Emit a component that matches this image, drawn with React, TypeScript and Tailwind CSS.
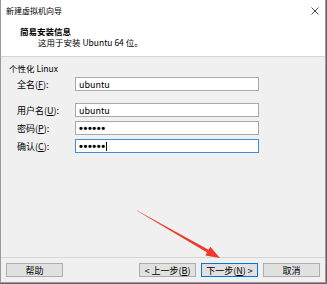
import React from "react";

const font = { fontFamily: '"Noto Sans CJK SC", "Noto Sans", sans-serif' };

const fields = [
  { label: "全名", key: "F", value: "ubuntu", gap: "mt-[3px]" },
  { label: "用户名", key: "U", value: "ubuntu", gap: "mt-[12px]" },
  { label: "密码", key: "P", value: "", gap: "mt-[4px]" },
  { label: "确认", key: "C", value: "", gap: "mt-[4px]", focused: true },
];

function Field({
  label,
  k,
  value,
  gap,
  focused,
}: {
  label: string;
  k: string;
  value: string;
  gap: string;
  focused?: boolean;
}) {
  return (
    <div className={`flex items-center ${gap}`}>
      <div className="w-[74px] pl-[16px] text-[9px] leading-[11px] text-black whitespace-nowrap">
        {label}(<span className="underline">{k}</span>):
      </div>
      <div
        className={`flex h-[14px] w-[184px] items-center border bg-white pl-[3px] ${
          focused ? "border-[#3c8fdc]" : "border-[#a9a9a9]"
        }`}
      >
        {value ? (
          <span className="text-[9px] leading-[11px] text-black">{value}</span>
        ) : (
          <span
            className="text-[11px] font-bold leading-[11px] tracking-[0.6px] text-black"
            style={{ fontFamily: '"Liberation Sans", sans-serif' }}
          >
            ••••••
          </span>
        )}
        {focused && <span className="ml-[0.5px] h-[9px] w-px bg-black" />}
      </div>
    </div>
  );
}

function Btn({ children, primary }: { children: React.ReactNode; primary?: boolean }) {
  return (
    <button
      className={`flex h-[14px] w-[57px] items-center justify-center border bg-[#e1e1e1] text-[9px] leading-[11px] text-black ${
        primary ? "border-[#0078d7]" : "border-[#adadad]"
      }`}
    >
      {children}
    </button>
  );
}

export default function App() {
  return (
    <div className="relative h-[284px] w-[327px] overflow-hidden bg-[#6b5a73]" style={font}>
      <div className="flex h-[283px] w-[326px] flex-col border-x border-b border-[#9a9a9a] bg-[#f0f0f0]">
        {/* Title bar */}
        <div className="flex h-[20px] items-center justify-between bg-white pl-[5px] pr-[6px]">
          <span className="pt-[2px] text-[8px] leading-[10px] text-black">新建虚拟机向导</span>
          <svg width="8" height="8" viewBox="0 0 8 8" className="mt-[1px]">
            <path d="M0.5 0.5 L7.5 7.5 M7.5 0.5 L0.5 7.5" stroke="#333" strokeWidth="0.9" />
          </svg>
        </div>

        {/* Header */}
        <div className="h-[37px] border-b border-[#d6d6d6] bg-white pl-[19px] pt-[6px]">
          <div className="text-[8.5px] font-bold leading-[11px] text-black">简易安装信息</div>
          <div className="pl-[18px] text-[8.5px] leading-[11px] text-black">这用于安装 Ubuntu 64 位。</div>
        </div>

        {/* Body */}
        <div className="flex-1 pt-[6px]">
          <div className="pl-[8px] text-[8.5px] leading-[11px] text-black">个性化 Linux</div>
          {fields.map((f) => (
            <Field key={f.key} label={f.label} k={f.key} value={f.value} gap={f.gap} focused={f.focused} />
          ))}
        </div>

        {/* Footer */}
        <div className="flex h-[25px] items-start border-t border-[#d6d6d6] pt-[5px] pl-[5px] pr-[5px]">
          <Btn>帮助</Btn>
          <div className="ml-auto flex gap-[5px]">
            <Btn>
              &lt; 上一步(<span className="underline">B</span>)
            </Btn>
            <Btn primary>
              下一步(<span className="underline">N</span>) &gt;
            </Btn>
            <Btn>取消</Btn>
          </div>
        </div>
      </div>

      {/* Red annotation arrow */}
      <svg className="pointer-events-none absolute left-0 top-0" width="327" height="284" viewBox="0 0 327 284">
        <polygon
          points="136.9,210.8 137.1,210.4 208.5,249.8 210.3,246.7 220,258 205.3,255.5 207.1,252.4"
          fill="#ee3a2c"
        />
      </svg>
    </div>
  );
}
